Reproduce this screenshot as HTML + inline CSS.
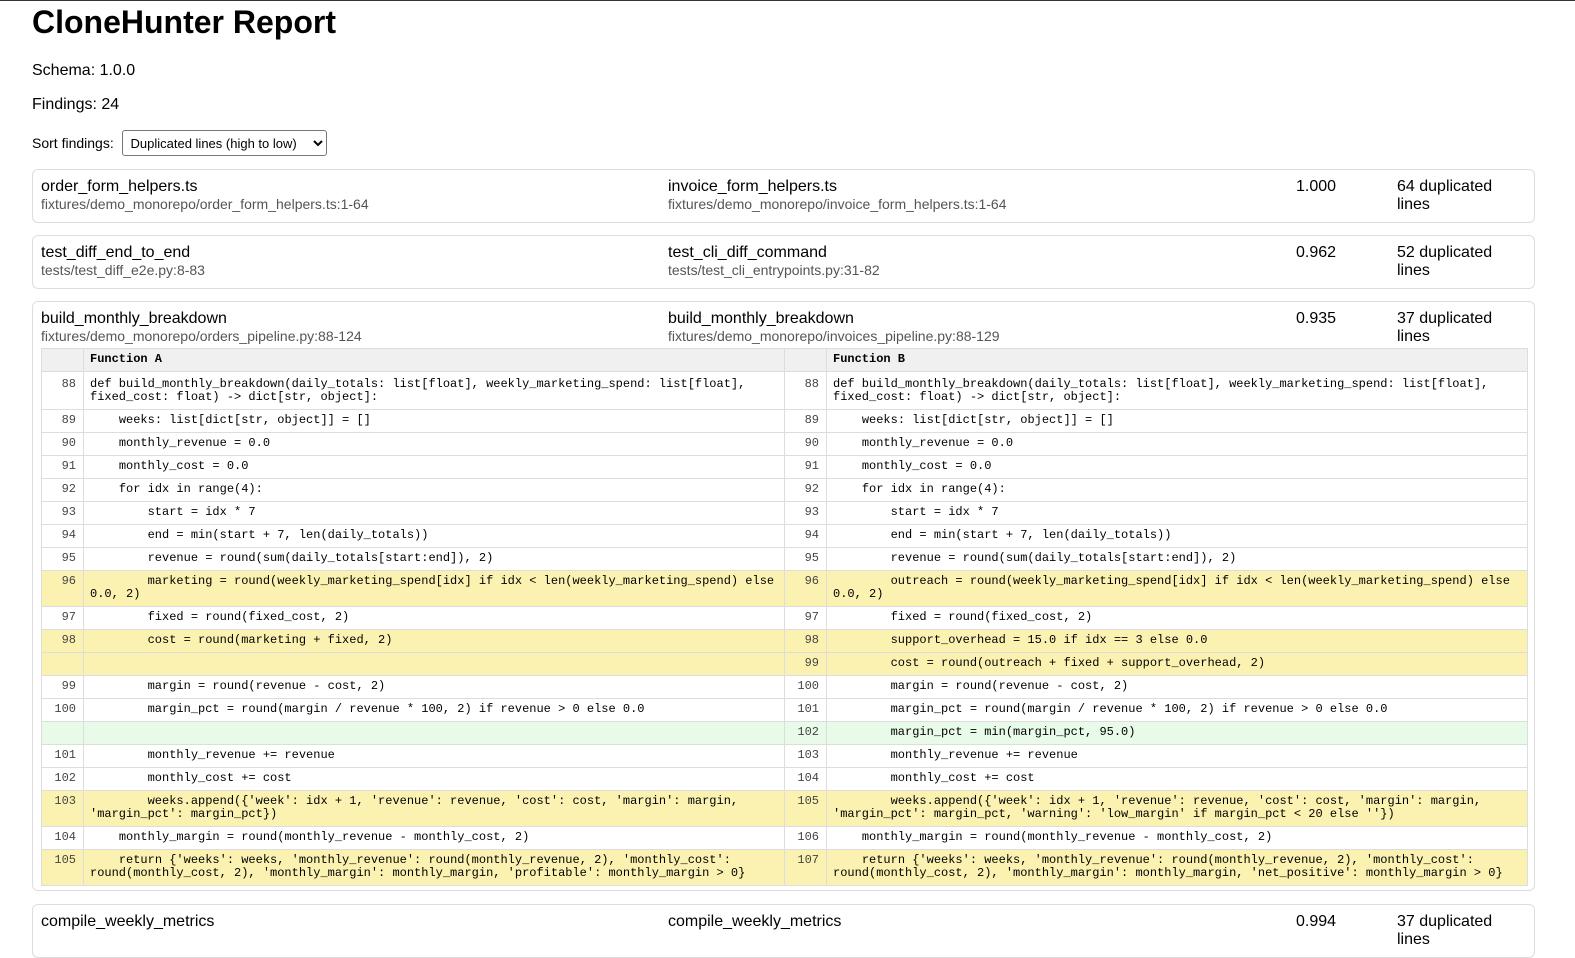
<!DOCTYPE html>
<html><head><meta charset="utf-8"><style>
html,body{margin:0;padding:0;background:#fff;}
body{font-family:"Liberation Sans",Arial,sans-serif;font-size:16px;color:#000;width:1575px;height:934px;overflow:hidden;border-top:1px solid #333;box-sizing:border-box;position:relative;}
h1{position:absolute;left:32px;top:3px;margin:0;font-size:32px;font-weight:bold;}
.p{position:absolute;left:32px;}
select{font-family:"Liberation Sans",Arial,sans-serif;font-size:13px;height:26px;border:1px solid #777;border-radius:3px;background:#fff;padding:0 4px;}
.card{position:absolute;left:32px;width:1485px;border:1px solid #ddd;border-radius:6px;padding:7px 8px 7px 8px;}
.hd{position:relative;height:38px;}
.hd div{position:absolute;top:1px;line-height:18px;}
.n{font-size:16px;}
.s{font-size:14px;color:#555;line-height:16px!important;}
table{border-collapse:collapse;table-layout:fixed;width:1486px;font-family:"Liberation Mono","DejaVu Sans Mono",monospace;font-size:12px;margin-top:1px;}
td,th{border:1px solid #ddd;padding:4px 6px 5px 6px;line-height:13px;vertical-align:top;white-space:pre-wrap;word-break:break-word;text-align:left;}
th{background:#f0f0f0;font-weight:bold;height:13px;padding:4px 6px 5px 6px;}
td.l{text-align:right;color:#444;padding-right:7px;}
tr.y td{background:#fbf2b1;}
td.g{background:#e8fbe9!important;}
tr.f td{padding-top:6px;}
</style></head><body>
<h1>CloneHunter Report</h1>
<div class="p" style="top:61px">Schema: 1.0.0</div>
<div class="p" style="top:95px">Findings: 24</div>
<div class="p" style="top:129px;font-size:14px;line-height:26px">Sort findings:&nbsp; <select style="vertical-align:top;width:205px"><option>Duplicated lines (high to low)</option></select></div>

<div class="card" style="top:168px;height:38px">
<div class="hd"><div style="left:0"><div class="n" style="position:static">order_form_helpers.ts</div><div class="s" style="position:static">fixtures/demo_monorepo/order_form_helpers.ts:1-64</div></div>
<div style="left:627px"><div class="n" style="position:static">invoice_form_helpers.ts</div><div class="s" style="position:static">fixtures/demo_monorepo/invoice_form_helpers.ts:1-64</div></div>
<div style="left:1255px">1.000</div><div style="left:1356px">64 duplicated<br>lines</div></div></div>

<div class="card" style="top:234px;height:38px">
<div class="hd"><div style="left:0"><div class="n" style="position:static">test_diff_end_to_end</div><div class="s" style="position:static">tests/test_diff_e2e.py:8-83</div></div>
<div style="left:627px"><div class="n" style="position:static">test_cli_diff_command</div><div class="s" style="position:static">tests/test_cli_entrypoints.py:31-82</div></div>
<div style="left:1255px">0.962</div><div style="left:1356px">52 duplicated<br>lines</div></div></div>

<div class="card" style="top:300px;height:574px">
<div class="hd"><div style="left:0"><div class="n" style="position:static">build_monthly_breakdown</div><div class="s" style="position:static">fixtures/demo_monorepo/orders_pipeline.py:88-124</div></div>
<div style="left:627px"><div class="n" style="position:static">build_monthly_breakdown</div><div class="s" style="position:static">fixtures/demo_monorepo/invoices_pipeline.py:88-129</div></div>
<div style="left:1255px">0.935</div><div style="left:1356px">37 duplicated<br>lines</div></div>
<table>
<colgroup><col style="width:42px"><col style="width:701px"><col style="width:42px"><col style="width:701px"></colgroup>
<tr><th></th><th>Function A</th><th></th><th>Function B</th></tr>
<tr class="f"><td class="l">88</td><td>def build_monthly_breakdown(daily_totals: list[float], weekly_marketing_spend: list[float], fixed_cost: float) -&gt; dict[str, object]:</td><td class="l">88</td><td>def build_monthly_breakdown(daily_totals: list[float], weekly_marketing_spend: list[float], fixed_cost: float) -&gt; dict[str, object]:</td></tr>
<tr><td class="l">89</td><td>    weeks: list[dict[str, object]] = []</td><td class="l">89</td><td>    weeks: list[dict[str, object]] = []</td></tr>
<tr><td class="l">90</td><td>    monthly_revenue = 0.0</td><td class="l">90</td><td>    monthly_revenue = 0.0</td></tr>
<tr><td class="l">91</td><td>    monthly_cost = 0.0</td><td class="l">91</td><td>    monthly_cost = 0.0</td></tr>
<tr><td class="l">92</td><td>    for idx in range(4):</td><td class="l">92</td><td>    for idx in range(4):</td></tr>
<tr><td class="l">93</td><td>        start = idx * 7</td><td class="l">93</td><td>        start = idx * 7</td></tr>
<tr><td class="l">94</td><td>        end = min(start + 7, len(daily_totals))</td><td class="l">94</td><td>        end = min(start + 7, len(daily_totals))</td></tr>
<tr><td class="l">95</td><td>        revenue = round(sum(daily_totals[start:end]), 2)</td><td class="l">95</td><td>        revenue = round(sum(daily_totals[start:end]), 2)</td></tr>
<tr class="y"><td class="l">96</td><td>        marketing = round(weekly_marketing_spend[idx] if idx &lt; len(weekly_marketing_spend) else 0.0, 2)</td><td class="l">96</td><td>        outreach = round(weekly_marketing_spend[idx] if idx &lt; len(weekly_marketing_spend) else 0.0, 2)</td></tr>
<tr><td class="l">97</td><td>        fixed = round(fixed_cost, 2)</td><td class="l">97</td><td>        fixed = round(fixed_cost, 2)</td></tr>
<tr class="y"><td class="l">98</td><td>        cost = round(marketing + fixed, 2)</td><td class="l">98</td><td>        support_overhead = 15.0 if idx == 3 else 0.0</td></tr>
<tr class="y"><td class="l"></td><td></td><td class="l">99</td><td>        cost = round(outreach + fixed + support_overhead, 2)</td></tr>
<tr><td class="l">99</td><td>        margin = round(revenue - cost, 2)</td><td class="l">100</td><td>        margin = round(revenue - cost, 2)</td></tr>
<tr><td class="l">100</td><td>        margin_pct = round(margin / revenue * 100, 2) if revenue &gt; 0 else 0.0</td><td class="l">101</td><td>        margin_pct = round(margin / revenue * 100, 2) if revenue &gt; 0 else 0.0</td></tr>
<tr><td class="l g"></td><td class="g"></td><td class="l g">102</td><td class="g">        margin_pct = min(margin_pct, 95.0)</td></tr>
<tr><td class="l">101</td><td>        monthly_revenue += revenue</td><td class="l">103</td><td>        monthly_revenue += revenue</td></tr>
<tr><td class="l">102</td><td>        monthly_cost += cost</td><td class="l">104</td><td>        monthly_cost += cost</td></tr>
<tr class="y"><td class="l">103</td><td>        weeks.append({'week': idx + 1, 'revenue': revenue, 'cost': cost, 'margin': margin, 'margin_pct': margin_pct})</td><td class="l">105</td><td>        weeks.append({'week': idx + 1, 'revenue': revenue, 'cost': cost, 'margin': margin, 'margin_pct': margin_pct, 'warning': 'low_margin' if margin_pct &lt; 20 else ''})</td></tr>
<tr><td class="l">104</td><td>    monthly_margin = round(monthly_revenue - monthly_cost, 2)</td><td class="l">106</td><td>    monthly_margin = round(monthly_revenue - monthly_cost, 2)</td></tr>
<tr class="y"><td class="l">105</td><td>    return {'weeks': weeks, 'monthly_revenue': round(monthly_revenue, 2), 'monthly_cost': round(monthly_cost, 2), 'monthly_margin': monthly_margin, 'profitable': monthly_margin &gt; 0}</td><td class="l">107</td><td>    return {'weeks': weeks, 'monthly_revenue': round(monthly_revenue, 2), 'monthly_cost': round(monthly_cost, 2), 'monthly_margin': monthly_margin, 'net_positive': monthly_margin &gt; 0}</td></tr>
</table>
</div>

<div class="card" style="top:903px;height:38px">
<div class="hd"><div style="left:0"><div class="n" style="position:static">compile_weekly_metrics</div></div>
<div style="left:627px"><div class="n" style="position:static">compile_weekly_metrics</div></div>
<div style="left:1255px">0.994</div><div style="left:1356px">37 duplicated<br>lines</div></div></div>
</body></html>
